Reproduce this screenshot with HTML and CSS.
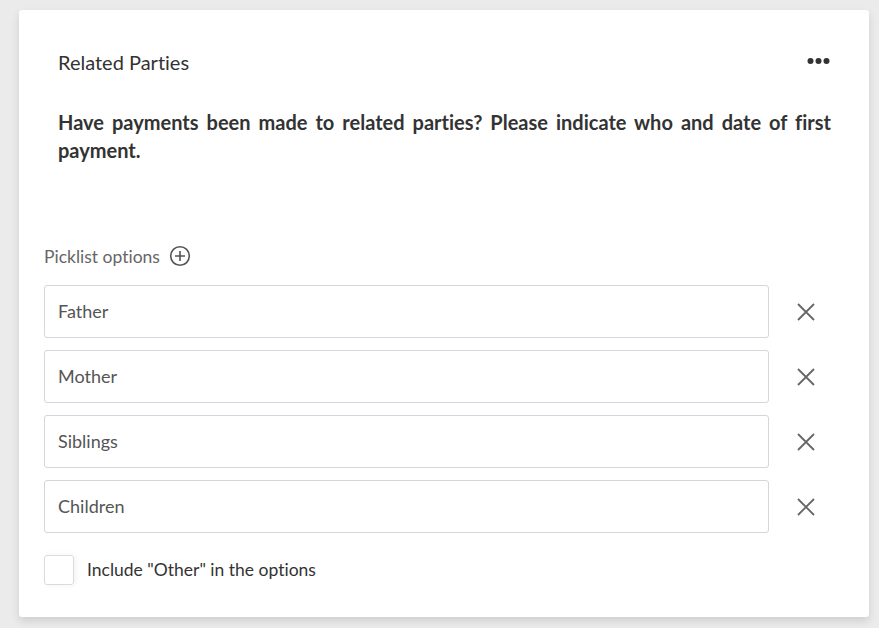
FILE: index.html
```html
<!DOCTYPE html>
<html>
<head>
<meta charset="utf-8">
<link rel="stylesheet" href="styles.css">
</head>
<body>
<div class="card">
  <div class="intro">
    <div class="header">
      <h1 class="title">Related Parties</h1>
      <button class="more" aria-label="More">
        <svg width="24" height="8" viewBox="0 0 24 8"><circle cx="3.5" cy="4" r="3" fill="#333"/><circle cx="11.5" cy="4" r="3" fill="#333"/><circle cx="19.5" cy="4" r="3" fill="#333"/></svg>
      </button>
    </div>
    <p class="question">Have payments been made to related parties? Please indicate who and date of first payment.</p>
  </div>
  <div class="picklist-label">
    <span>Picklist options</span>
    <svg class="add" width="22" height="22" viewBox="0 0 22 22"><circle cx="11" cy="11" r="9.3" fill="none" stroke="#555" stroke-width="1.6"/><path d="M11 6v10M6 11h10" stroke="#555" stroke-width="1.6"/></svg>
  </div>
  <div class="options">
    <div class="option"><div class="field">Father</div><span class="remove"><svg width="18" height="18" viewBox="0 0 18 18"><path d="M1 1L17 17M17 1L1 17" stroke="#666" stroke-width="1.8"/></svg></span></div>
    <div class="option"><div class="field">Mother</div><span class="remove"><svg width="18" height="18" viewBox="0 0 18 18"><path d="M1 1L17 17M17 1L1 17" stroke="#666" stroke-width="1.8"/></svg></span></div>
    <div class="option"><div class="field">Siblings</div><span class="remove"><svg width="18" height="18" viewBox="0 0 18 18"><path d="M1 1L17 17M17 1L1 17" stroke="#666" stroke-width="1.8"/></svg></span></div>
    <div class="option"><div class="field">Children</div><span class="remove"><svg width="18" height="18" viewBox="0 0 18 18"><path d="M1 1L17 17M17 1L1 17" stroke="#666" stroke-width="1.8"/></svg></span></div>
  </div>
  <label class="other"><span class="checkbox"></span><span class="other-text">Include "Other" in the options</span></label>
</div>
</body>
</html>
```
FILE: styles.css
```css
* { box-sizing: border-box; }
html, body { margin: 0; padding: 0; }
body {
  background: #ebebeb;
  font-family: Lato, "Open Sans", sans-serif;
  font-variant-ligatures: none;
  color: #333;
  width: 879px;
  height: 628px;
  overflow: hidden;
}
.card {
  margin: 10px 0 0 19px;
  width: 850px;
  height: 607px;
  background: #fff;
  border-radius: 3px;
  box-shadow: 0 4px 8px rgba(0,0,0,0.12);
  padding: 39px 25px 0 25px;
}
.intro { padding: 0 13px 0 14px; height: 195px; }
.header {
  display: flex;
  justify-content: space-between;
  align-items: center;
  height: 26px;
}
.title {
  margin: 0;
  font-size: 20px;
  font-weight: 400;
  line-height: 26px;
  color: #333;
}
.more {
  border: 0;
  background: none;
  padding: 0;
  display: flex;
  margin-top: -2px;
}
.question {
  margin: 33px 0 0 0;
  font-size: 20px;
  font-weight: 700;
  line-height: 28px;
  text-align: justify;
  color: #333;
}
.picklist-label {
  display: flex;
  align-items: center;
  gap: 9px;
  font-size: 17.5px;
  color: #666;
  height: 24px;
}
.add { display: block; }
.options {
  margin-top: 17px;
  display: flex;
  flex-direction: column;
  gap: 12px;
}
.option {
  display: flex;
  align-items: center;
}
.field {
  width: 725px;
  height: 53px;
  border: 1px solid #d3d6da;
  border-radius: 3px;
  padding: 0 13px 2px;
  display: flex;
  align-items: center;
  font-size: 18px;
  color: #555;
}
.remove {
  display: flex;
  margin-left: 28px;
}
.other {
  display: flex;
  align-items: center;
  gap: 13px;
  margin-top: 22px;
  font-size: 17.5px;
  color: #333;
}
.other-text { padding-bottom: 2px; }
.checkbox {
  width: 30px;
  height: 30px;
  border: 1px solid #d8dbe0;
  border-radius: 3px;
  box-shadow: 2px 0 6px rgba(0,0,0,0.05);
}
```
